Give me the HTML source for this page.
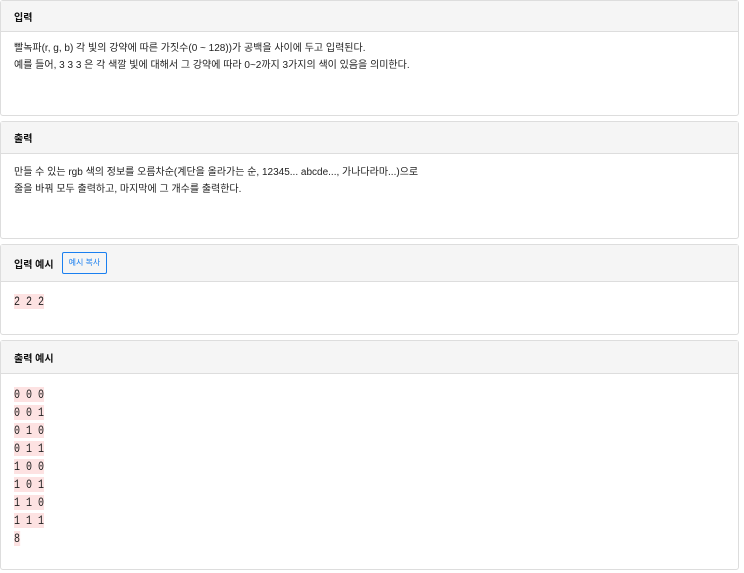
<!DOCTYPE html>
<html><head><meta charset="utf-8"><style>
body{margin:0;background:#fff;font-family:"Liberation Sans","Noto Sans CJK KR",sans-serif;color:#222;}
.p{position:absolute;left:0;width:739px;border:1px solid #ddd;border-radius:3px;background:#fff;box-sizing:border-box;}
.h{background:#f5f5f5;border-bottom:1px solid #ddd;box-sizing:border-box;font-size:10px;font-weight:bold;color:#111;padding-left:13px;display:flex;align-items:center;}
.b{padding:0 13px;font-size:10px;line-height:17px;}
.btn{display:inline-block;margin-left:8px;border:1px solid #1a7ff0;border-radius:2px;color:#1a7ff0;font-weight:normal;font-size:8px;padding:0 6px;height:20px;line-height:20px;}
pre{margin:0;font-family:"Liberation Mono",monospace;font-size:13px;line-height:18px;color:#222;display:inline-block;transform:scaleX(0.77);transform-origin:0 0;}
pre span{background:#fde2e2;}
</style></head><body>
<div class="p" style="top:0;height:116px"><div class="h" style="height:31px">입력</div>
<div class="b" style="padding-top:8px">빨녹파(r, g, b) 각 빛의 강약에 따른 가짓수(0 ~ 128))가 공백을 사이에 두고 입력된다.<br>예를 들어, 3 3 3 은 각 색깔 빛에 대해서 그 강약에 따라 0~2까지 3가지의 색이 있음을 의미한다.</div></div>
<div class="p" style="top:121px;height:118px"><div class="h" style="height:32px">출력</div>
<div class="b" style="padding-top:10px">만들 수 있는 rgb 색의 정보를 오름차순(계단을 올라가는 순, 12345... abcde..., 가나다라마...)으로<br>줄을 바꿔 모두 출력하고, 마지막에 그 개수를 출력한다.</div></div>
<div class="p" style="top:244px;height:91px"><div class="h" style="height:37px">입력 예시<span class="btn">예시 복사</span></div>
<div class="b" style="padding-top:11px"><pre><span>2 2 2</span></pre></div></div>
<div class="p" style="top:340px;height:230px"><div class="h" style="height:33px">출력 예시</div>
<div class="b" style="padding-top:12px"><pre><span>0 0 0</span>
<span>0 0 1</span>
<span>0 1 0</span>
<span>0 1 1</span>
<span>1 0 0</span>
<span>1 0 1</span>
<span>1 1 0</span>
<span>1 1 1</span>
<span>8</span></pre></div></div>
</body></html>
